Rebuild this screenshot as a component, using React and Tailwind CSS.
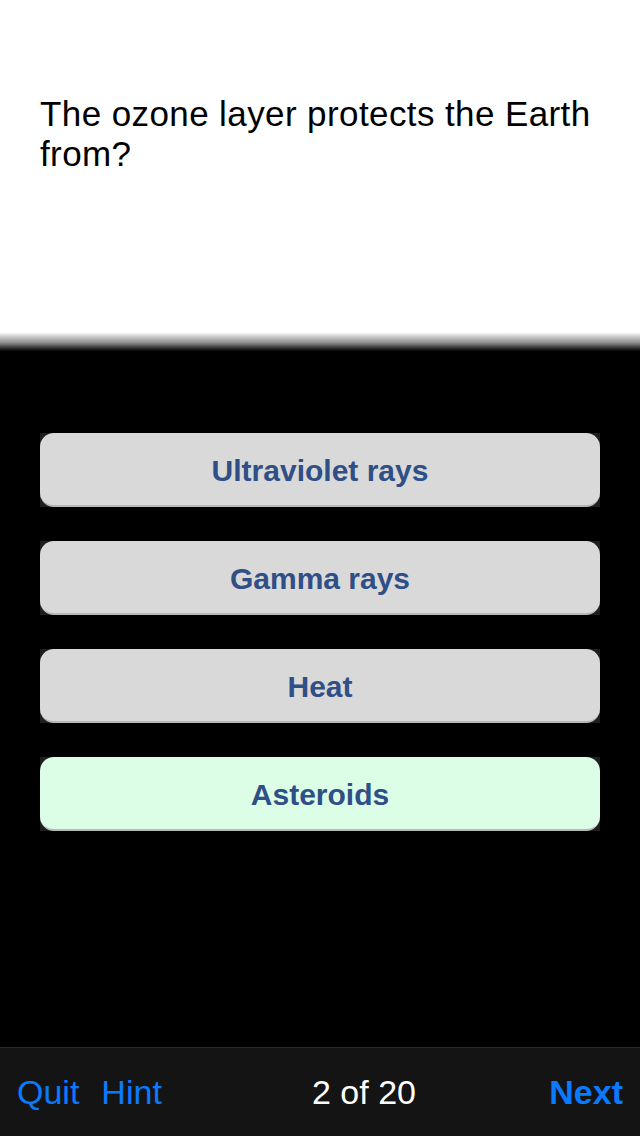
const ANSWERS = [
  { label: 'Ultraviolet rays', bg: 'bg-[#d9d9d9]' },
  { label: 'Gamma rays', bg: 'bg-[#d9d9d9]' },
  { label: 'Heat', bg: 'bg-[#d9d9d9]' },
  { label: 'Asteroids', bg: 'bg-[#dcfde6]' },
]

export default function App() {
  return (
    <div className="w-[640px] h-[1136px] bg-black flex flex-col overflow-hidden font-['Liberation_Sans',Arial,sans-serif]">
      {/* Question */}
      <div className="h-[333px] bg-white px-[40px] pt-[94px] flex-shrink-0">
        <p className="text-[35px] leading-[40px] text-black tracking-[0.4px]">
          The ozone layer protects the Earth from?
        </p>
      </div>
      <div className="h-[20px] bg-gradient-to-b from-[#f4f4f4] via-[#8a8a8a] to-black flex-shrink-0" />

      {/* Answers */}
      <div className="flex-1 flex flex-col gap-[34px] px-[40px] pt-[80px]">
        {ANSWERS.map(a => (
          <div key={a.label} className="h-[74px] bg-[#1e1e1e]">
            <div className={`h-full rounded-[14px] ${a.bg} border-b-2 border-[#b8b8b8] flex items-center justify-center`}>
              <span className="text-[30px] font-bold text-[#2f4f86] pt-[3px]">{a.label}</span>
            </div>
          </div>
        ))}
      </div>

      {/* Toolbar */}
      <div className="h-[89px] bg-[#141414] border-t border-[#2a2a2a] flex items-center px-[17px] text-[34px] flex-shrink-0">
        <div className="w-[295px] flex gap-[22px] text-[#0a7aff]">
          <span>Quit</span>
          <span>Hint</span>
        </div>
        <span className="text-white">2 of 20</span>
        <div className="flex-1 flex justify-end text-[#0a7aff] font-semibold">
          <span>Next</span>
        </div>
      </div>
    </div>
  )
}
